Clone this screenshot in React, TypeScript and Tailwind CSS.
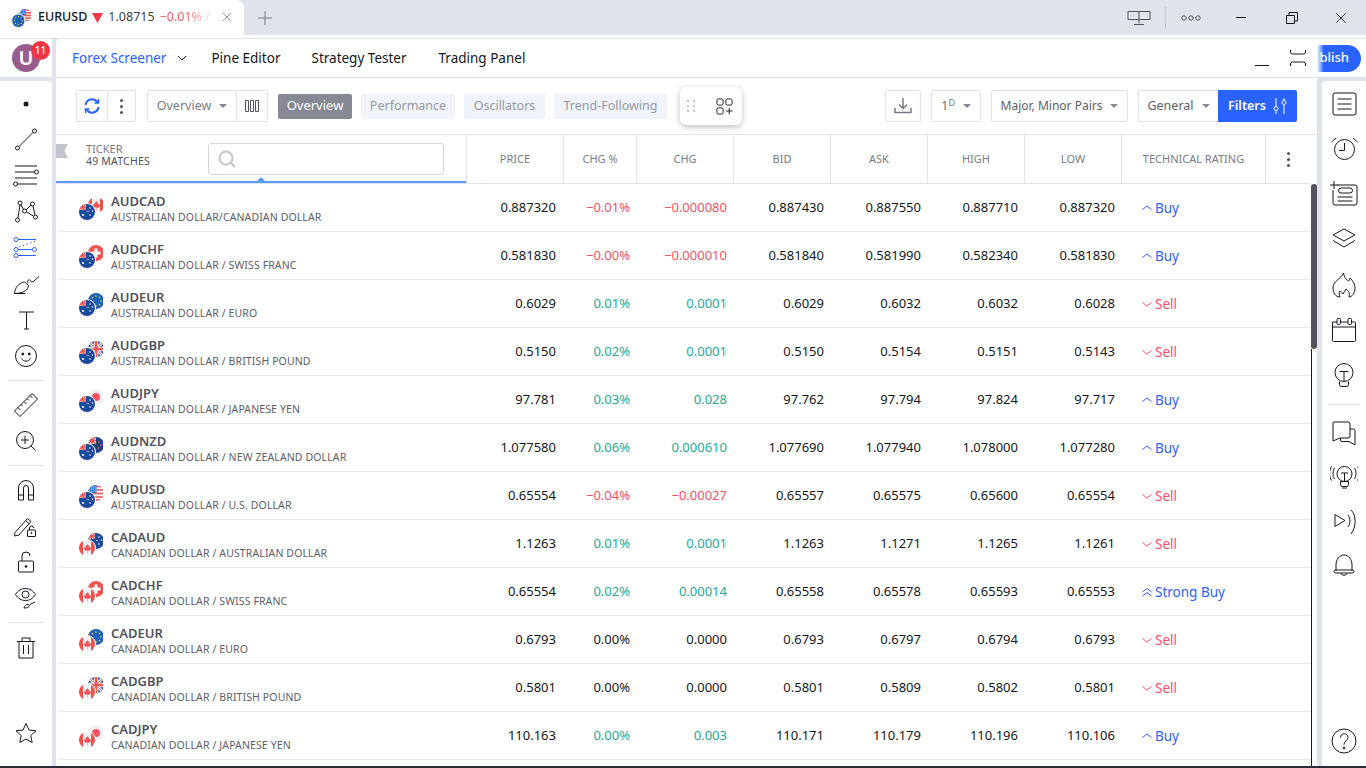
import type { ReactNode } from "react";

const cols = "grid grid-cols-[410px_97px_73px_97px_97px_97px_97px_97px_144px_45px]";

type Cur = "AU" | "CA" | "CH" | "EU" | "GB" | "JP" | "NZ" | "US";

interface Row {
  sym: string;
  desc: string;
  a: Cur;
  b: Cur;
  vals: string[];
  chgP: string;
  chg: string;
  dir: "up" | "down" | "flat" | "upchg";
  rating: "Buy" | "Sell" | "Strong Buy";
}

const rows: Row[] = [
  { sym: "AUDCAD", desc: "AUSTRALIAN DOLLAR/CANADIAN DOLLAR", a: "AU", b: "CA", chgP: "−0.01%", chg: "−0.000080", dir: "down", rating: "Buy", vals: ["0.887320", "0.887430", "0.887550", "0.887710", "0.887320"] },
  { sym: "AUDCHF", desc: "AUSTRALIAN DOLLAR / SWISS FRANC", a: "AU", b: "CH", chgP: "−0.00%", chg: "−0.000010", dir: "down", rating: "Buy", vals: ["0.581830", "0.581840", "0.581990", "0.582340", "0.581830"] },
  { sym: "AUDEUR", desc: "AUSTRALIAN DOLLAR / EURO", a: "AU", b: "EU", chgP: "0.01%", chg: "0.0001", dir: "up", rating: "Sell", vals: ["0.6029", "0.6029", "0.6032", "0.6032", "0.6028"] },
  { sym: "AUDGBP", desc: "AUSTRALIAN DOLLAR / BRITISH POUND", a: "AU", b: "GB", chgP: "0.02%", chg: "0.0001", dir: "up", rating: "Sell", vals: ["0.5150", "0.5150", "0.5154", "0.5151", "0.5143"] },
  { sym: "AUDJPY", desc: "AUSTRALIAN DOLLAR / JAPANESE YEN", a: "AU", b: "JP", chgP: "0.03%", chg: "0.028", dir: "up", rating: "Buy", vals: ["97.781", "97.762", "97.794", "97.824", "97.717"] },
  { sym: "AUDNZD", desc: "AUSTRALIAN DOLLAR / NEW ZEALAND DOLLAR", a: "AU", b: "NZ", chgP: "0.06%", chg: "0.000610", dir: "up", rating: "Buy", vals: ["1.077580", "1.077690", "1.077940", "1.078000", "1.077280"] },
  { sym: "AUDUSD", desc: "AUSTRALIAN DOLLAR / U.S. DOLLAR", a: "AU", b: "US", chgP: "−0.04%", chg: "−0.00027", dir: "down", rating: "Sell", vals: ["0.65554", "0.65557", "0.65575", "0.65600", "0.65554"] },
  { sym: "CADAUD", desc: "CANADIAN DOLLAR / AUSTRALIAN DOLLAR", a: "CA", b: "AU", chgP: "0.01%", chg: "0.0001", dir: "up", rating: "Sell", vals: ["1.1263", "1.1263", "1.1271", "1.1265", "1.1261"] },
  { sym: "CADCHF", desc: "CANADIAN DOLLAR / SWISS FRANC", a: "CA", b: "CH", chgP: "0.02%", chg: "0.00014", dir: "up", rating: "Strong Buy", vals: ["0.65554", "0.65558", "0.65578", "0.65593", "0.65553"] },
  { sym: "CADEUR", desc: "CANADIAN DOLLAR / EURO", a: "CA", b: "EU", chgP: "0.00%", chg: "0.0000", dir: "flat", rating: "Sell", vals: ["0.6793", "0.6793", "0.6797", "0.6794", "0.6793"] },
  { sym: "CADGBP", desc: "CANADIAN DOLLAR / BRITISH POUND", a: "CA", b: "GB", chgP: "0.00%", chg: "0.0000", dir: "flat", rating: "Sell", vals: ["0.5801", "0.5801", "0.5809", "0.5802", "0.5801"] },
  { sym: "CADJPY", desc: "CANADIAN DOLLAR / JAPANESE YEN", a: "CA", b: "JP", chgP: "0.00%", chg: "0.003", dir: "upchg", rating: "Buy", vals: ["110.163", "110.171", "110.179", "110.196", "110.106"] },
];

// flag artwork, drawn in a 16x16 box and clipped to a circle by the caller
const FlagArt = ({ c }: { c: Cur }) => {
  switch (c) {
    case "AU":
      return (
        <>
          <rect width="16" height="16" fill="#1a4a9c" />
          <rect width="7" height="6" fill="#f0f2f5" />
          <path d="M0 0l7 6M7 0L0 6" stroke="#ef5350" strokeWidth="1.2" />
          <path d="M3.5 0v6M0 3h7" stroke="#ef5350" strokeWidth="1.4" />
          <circle cx="4" cy="11" r="1.1" fill="#fff" />
          <circle cx="11" cy="4" r=".8" fill="#fff" />
          <circle cx="13.5" cy="7" r=".8" fill="#fff" />
          <circle cx="11" cy="11" r=".8" fill="#fff" />
          <circle cx="9" cy="7.5" r=".7" fill="#fff" />
        </>
      );
    case "NZ":
      return (
        <>
          <rect width="16" height="16" fill="#1a3f8c" />
          <rect width="8" height="7" fill="#f0f2f5" />
          <path d="M0 0l8 7M8 0L0 7" stroke="#ef5350" strokeWidth="1.4" />
          <path d="M4 0v7M0 3.5h8" stroke="#ef5350" strokeWidth="1.6" />
          <circle cx="11" cy="5" r=".9" fill="#ef5350" />
          <circle cx="13" cy="8" r=".9" fill="#ef5350" />
          <circle cx="10.5" cy="11" r=".9" fill="#ef5350" />
        </>
      );
    case "CA":
      return (
        <>
          <rect width="16" height="16" fill="#f0f2f5" />
          <rect width="4" height="16" fill="#ef5350" />
          <rect x="12" width="4" height="16" fill="#ef5350" />
          <path d="M8 3.5l1 2 1.2-.5-.4 2.6 1.4-.8.4 1.2 1 .2-1.4 1.6.2 1-2.7-.3V13h-.4v-2.5l-2.7.3.2-1L4.4 8.2l1-.2.4-1.2 1.4.8L6.8 5 8 5.5z" fill="#ef5350" />
        </>
      );
    case "CH":
      return (
        <>
          <rect width="16" height="16" fill="#ef5350" />
          <path d="M6.5 3.5h3v3h3v3h-3v3h-3v-3h-3v-3h3z" fill="#fff" />
        </>
      );
    case "EU":
      return (
        <>
          <rect width="16" height="16" fill="#1f63b5" />
          {[0, 1, 2, 3, 4, 5, 6, 7].map((i) => (
            <circle
              key={i}
              cx={8 + 5 * Math.cos((i * Math.PI) / 4)}
              cy={8 + 5 * Math.sin((i * Math.PI) / 4)}
              r=".8"
              fill="#f9cf4a"
            />
          ))}
        </>
      );
    case "GB":
      return (
        <>
          <rect width="16" height="16" fill="#1a4a9c" />
          <path d="M0 0l16 16M16 0L0 16" stroke="#f0f2f5" strokeWidth="3" />
          <path d="M0 0l16 16M16 0L0 16" stroke="#ef5350" strokeWidth="1" />
          <path d="M8 0v16M0 8h16" stroke="#f0f2f5" strokeWidth="4.5" />
          <path d="M8 0v16M0 8h16" stroke="#ef5350" strokeWidth="2.5" />
        </>
      );
    case "JP":
      return (
        <>
          <rect width="16" height="16" fill="#eef0f5" />
          <circle cx="8" cy="8" r="4" fill="#f7525f" />
        </>
      );
    case "US":
      return (
        <>
          <rect width="16" height="16" fill="#f0f2f5" />
          <path d="M0 1.5h16M0 5h16M0 8.5h16M0 12h16M0 15h16" stroke="#ef5350" strokeWidth="1.7" />
          <rect width="8.5" height="8" fill="#2f7de1" />
          <path d="M1 2h7M1 4h7M1 6h7" stroke="#dbe6f7" strokeWidth=".8" strokeDasharray="1 1" />
        </>
      );
  }
};

const PairFlag = ({ a, b, id, className = "h-6 w-6 shrink-0" }: { a: Cur; b: Cur; id: string; className?: string }) => (
  <svg viewBox="0 0 24 24" className={className}>
    <defs>
      <clipPath id={id + "b"}>
        <circle cx="8" cy="8" r="8" />
      </clipPath>
      <clipPath id={id + "a"}>
        <circle cx="8" cy="8" r="8" />
      </clipPath>
    </defs>
    <g transform="translate(9 1)" clipPath={"url(#" + id + "b)"}>
      <FlagArt c={b} />
    </g>
    <circle cx="8" cy="16" r="9" fill="#fff" />
    <g transform="translate(0 8)" clipPath={"url(#" + id + "a)"}>
      <FlagArt c={a} />
    </g>
  </svg>
);

const Ico = ({ children }: { children: ReactNode }) => (
  <svg viewBox="0 0 28 28" fill="none" stroke="currentColor" strokeWidth="1" className="h-7 w-7">
    {children}
  </svg>
);

const Caret = () => (
  <svg viewBox="0 0 8 4" className="h-1 w-2 fill-[#868993]">
    <path d="M0 0h8L4 4z" />
  </svg>
);

const leftTop: ReactNode[] = [
  <circle cx="14" cy="14" r="2.5" fill="currentColor" stroke="none" />,
  <>
    <circle cx="5.5" cy="22" r="2" />
    <circle cx="22.5" cy="5" r="2" />
    <path d="M7 20.5L21 6.5" />
  </>,
  <>
    <path d="M3 4h22M3 10h19.5M3 16h22M5.5 22H25" />
    <circle cx="24.5" cy="10" r="2" />
    <circle cx="3.5" cy="22" r="2" />
  </>,
  <>
    <circle cx="5.5" cy="22" r="2" />
    <circle cx="8" cy="5" r="2" />
    <circle cx="12.5" cy="13" r="2" />
    <circle cx="20.5" cy="6" r="2" />
    <circle cx="23.5" cy="19" r="2" />
    <path d="M6 20l2-13M9 7l2.5 4.5M14 12l5-5M21 8l2 9M14.5 14l7 4" />
  </>,
  <g stroke="#2962ff">
    <circle cx="4" cy="5.5" r="2" />
    <circle cx="4" cy="15.5" r="2" />
    <circle cx="4" cy="21.5" r="2" />
    <circle cx="22.5" cy="15.5" r="2" />
    <path d="M6 5.5h18M6 15.5h14.5M6 21.5h18" />
    <path d="M7 13l17-6" strokeDasharray="1.5 2.5" />
  </g>,
  <>
    <path d="M2.5 23.5c.5-6 4.5-11 10-11.5l4 3.5c-.5 5-6 8-14 8zM2.5 23.5h11" />
    <path d="M16 13c-1-3 1-4 2.5-2.5.5 2 2 1.5 3.5.5l5-4.5" />
  </>,
  <path d="M7 6h15M14.5 6v17M12 23h5" />,
  <>
    <circle cx="14" cy="14" r="10.5" />
    <circle cx="10.8" cy="12" r="1" fill="currentColor" />
    <circle cx="17.2" cy="12" r="1" fill="currentColor" />
    <path d="M9.5 16.5c2 3.5 7 3.5 9 0" />
  </>,
];

const leftMid: ReactNode[] = [
  <>
    <path d="M2.5 20L20 2.5l5.5 5.5L8 25.5z" />
    <path d="M6 16.5l2.5 2.5M9 13.5l1.5 1.5M12 10.500l2.5 2.5M15 7.5l1.5 1.5M18 4.5l2.5 2.5" />
  </>,
  <>
    <circle cx="13" cy="13" r="8.5" />
    <path d="M13 9v8M9 13h8M19 19l4.5 4.5" />
  </>,
];

const leftMag: ReactNode[] = [
  <>
    <path d="M6.5 24V12a7.5 7.5 0 0115 0v12h-5V12a2.5 2.5 0 00-5 0v12z" />
    <path d="M6.5 19h5M16.5 19h5" />
  </>,
  <>
    <path d="M3 20.5L15.5 6.5l3.5 3L7 23l-4.5 1z" />
    <path d="M13.5 8.5l3.5 3" />
    <rect x="15.5" y="18" width="8" height="6.5" rx=".5" />
    <path d="M17.5 18v-2a2 2 0 014 0" />
    <circle cx="19.5" cy="21" r=".6" fill="currentColor" />
  </>,
  <>
    <rect x="6.5" y="13" width="15" height="11" rx="1" />
    <path d="M10 13V8a4 4 0 018 0" />
    <circle cx="14" cy="18.5" r="1.3" fill="currentColor" stroke="none" />
  </>,
  <>
    <path d="M3.5 10.5C6 6.5 9.5 4.5 13.5 4.5s7.5 2 10 6c-2.5 4-6 6-10 6s-7.500-2-10-6z" />
    <circle cx="13.5" cy="10.5" r="3.5" />
    <path d="M12 24c.5-2.500 2-3.500 4-3.500l1.500 1c-.5 2-2.500 2.500-5.500 2.500zM18 20.500l5-2.500" />
  </>,
];

const rightTop: ReactNode[] = [
  <>
    <rect x="3" y="3" width="23" height="22" rx="2" />
    <path d="M7.5 9h14M7.5 14h14M7.5 19h14" />
  </>,
  <>
    <circle cx="14.5" cy="14.5" r="10" />
    <path d="M14.5 8v7.5H9M1.5 7L6 3M27.5 7L23 3" />
  </>,
  <>
    <path d="M7 5h18a2 2 0 012 2v16a2 2 0 01-2 2H5a2 2 0 01-2-2V10" />
    <rect x="8.5" y="8" width="14" height="5" rx="2.5" />
    <path d="M7.5 17h15M7.5 21h15M4 1v8M0 5h8" />
  </>,
  <path d="M14 3l11 6-11 6-11-6zM3 14.5l11 6.5 11-6.5" />,
  <path d="M13.5 2c1 5.500 3 6.500 5 8 1-1 1.500-2 1.500-3 3 3 5 6 5 10 0 5-3 9-6 9 1-3 0-6-3-8-1 2-2 3-3 5-1-1.500-2-2-3-3-1 2-1 4 0 6-5 0-7-5-7-9 0-7 8-9 10.500-15z" />,
  <>
    <path d="M2.5 6h22a1 1 0 011 1v17.500a1 1 0 01-1 1h-21a1 1 0 01-1-1V6zM2.500 11h23" />
    <rect x="7" y="2.5" width="3.5" height="6" rx="1" fill="#fff" />
    <rect x="18" y="2.5" width="3.5" height="6" rx="1" fill="#fff" />
  </>,
  <>
    <circle cx="14" cy="11.5" r="9" />
    <path d="M9.5 10.5h9M14 10.5V20M9.5 20.500v3a2 2 0 002 2h5a2 2 0 002-2v-3" />
  </>,
];

const rightBottom: ReactNode[] = [
  <>
    <path d="M4 3h14a2 2 0 012 2v12a2 2 0 01-2 2H10l-7 3V4a1 1 0 011-1z" />
    <path d="M20 10h3.5a1.5 1.5 0 011.5 1.5V26l-6-3.500h-7a1.500 1.500 0 01-1.500-1.500v-2" />
  </>,
  <>
    <circle cx="14.5" cy="11" r="7.5" />
    <path d="M11 10h7M14.5 10v8.500M10.500 18.500h8v3a2 2 0 01-2 2h-4a2 2 0 01-2-2zM12 25h5" />
    <path d="M4.5 5c-2 3-2 8 0 11M1.500 3.500c-2.500 4-2.500 10 0 14M24.500 5c2 3 2 8 0 11M27.500 3.500c2.500 4 2.500 10 0 14" />
  </>,
  <>
    <path d="M5 7.5l10 6-10 6z" />
    <path d="M18 8c2.500 3 2.500 9 0 12M21 3c5.500 5 5.500 17 0 24" />
  </>,
  <>
    <path d="M6 20v-6c0-5 3-10 8-10s8 5 8 10v6" />
    <path d="M4 20.5a1.5 1.5 0 011.5-1.5h17a1.500 1.500 0 010 3h-17A1.500 1.500 0 014 20.500zM11 22c.5 3 5.500 3 6 0" />
  </>,
];

const Chip = ({ children, w }: { children: ReactNode; w: string }) => (
  <div className={"flex h-[25px] items-center justify-center rounded-[2px] bg-[#f0f3fa] text-[12.5px] text-[#9598a1] " + w}>{children}</div>
);

const dirColor = { up: "text-[#22ab94]", upchg: "text-[#22ab94]", down: "text-[#f7525f]", flat: "text-[#131722]" };

const Rating = ({ r }: { r: Row["rating"] }) => {
  const sell = r === "Sell";
  return (
    <div className={"flex items-center gap-[2px] pl-5 text-[13.5px] " + (sell ? "text-[#f7525f]" : "text-[#2962ff]")}>
      <svg viewBox="0 0 12 12" fill="none" stroke="currentColor" strokeWidth="1" className="h-3 w-3">
        {sell && <path d="M1.5 4.5L6 8l4.500-3.500" />}
        {r === "Buy" && <path d="M1.5 7.5L6 4l4.500 3.500" />}
        {r === "Strong Buy" && <path d="M1.5 6L6 2.500 10.500 6M1.500 10L6 6.500 10.500 10" />}
      </svg>
      {r}
    </div>
  );
};

const TableRow = ({ row }: { row: Row }) => {
  const [price, bid, ask, high, low] = row.vals;
  const num = "flex items-center justify-end pr-1.5 text-[13px] text-[#131722]";
  return (
    <div className={cols + " relative h-12 shrink-0"}>
      <div className="flex items-center gap-2 pl-[23px]">
        <PairFlag a={row.a} b={row.b} id={row.sym} />
        <div className="flex flex-col pt-px">
          <span className="text-[13px] leading-4 font-semibold text-[#50535e]">{row.sym}</span>
          <span className="text-[10.5px] leading-4 tracking-[0.12px] text-[#5d606b]">{row.desc}</span>
        </div>
      </div>
      <div className={num + " pr-[7px]"}>{price}</div>
      <div className={"flex items-center justify-end pr-1.5 text-[13px] " + dirColor[row.dir]}>{row.chgP}</div>
      <div className={"flex items-center justify-end pr-1.5 text-[13px] " + dirColor[row.dir]}>{row.chg}</div>
      <div className={num}>{bid}</div>
      <div className={num}>{ask}</div>
      <div className={num}>{high}</div>
      <div className={num}>{low}</div>
      <Rating r={row.rating} />
      <div />
      <div className="absolute right-0 bottom-0 left-0.5 h-px bg-[#e8e9ee]" />
    </div>
  );
};

const HeadCell = ({ label }: { label: string }) => (
  <div className="flex items-center justify-center border-l border-[#e0e3eb] text-[11px] text-[#787b86]">{label}</div>
);

export default function App() {
  return (
    <div className="relative flex h-[768px] w-[1366px] flex-col overflow-hidden bg-[#e0e3eb] font-['Noto_Sans',sans-serif] text-[#131722]">
      {/* window title bar */}
      <div className="flex h-[35px] shrink-0 items-center">
        <div className="flex h-[38px] w-[244px] shrink-0 items-center self-start rounded-tr-lg bg-white pb-1 pl-3 text-[12.5px]">
          <PairFlag a="EU" b="US" id="tab" className="h-[19px] w-[19px] shrink-0" />
          <span className="ml-[7px] font-medium">EURUSD</span>
          <svg viewBox="0 0 10 10" className="mx-[5px] h-[11px] w-[11px] shrink-0 fill-[#f23645]"><path d="M0 1h10L5 10z" /></svg>
          <span className="text-[#3b3e48]">1.08715</span>
          <span className="ml-[5px] w-[50px] shrink-0 overflow-hidden bg-gradient-to-r from-[#f7525f] from-50% to-[#fde0e2] bg-clip-text whitespace-nowrap text-transparent">−0.01% /</span>
          <svg viewBox="0 0 12 12" fill="none" stroke="#868993" className="ml-3 h-2.5 w-2.5 shrink-0"><path d="M1 1l10 10M11 1L1 11" /></svg>
        </div>
        <svg viewBox="0 0 14 14" fill="none" stroke="#787b86" className="ml-[14px] h-[14px] w-[14px]"><path d="M7 0v14M0 7h14" /></svg>
        <div className="ml-auto flex items-center text-[#50535e]">
          <svg viewBox="0 0 24 16" fill="none" stroke="currentColor" className="h-4 w-6"><path d="M1 1.5h22v8H1zM12 1.5v12M7 14.5h10" /></svg>
          <div className="mr-[15px] ml-[14px] h-[22px] w-px bg-[#c1c4cd]" />
          <svg viewBox="0 0 20 6" fill="none" stroke="currentColor" className="h-1.5 w-5"><circle cx="3" cy="3" r="2.2" /><circle cx="10" cy="3" r="2.2" /><circle cx="17" cy="3" r="2.2" /></svg>
          <div className="ml-[35px] h-px w-2.5 bg-[#131722]" />
          <svg viewBox="0 0 12 12" fill="none" stroke="#131722" className="ml-10 h-3 w-3"><path d="M.5 3.5h8v8h-8zM3 3.500V.5h8.500V9H8.500" /></svg>
          <svg viewBox="0 0 12 12" fill="none" stroke="#131722" className="mr-5 ml-[38px] h-2.5 w-2.5"><path d="M.5.5l11 11M11.5.5l-11 11" /></svg>
        </div>
      </div>
      <div className="h-[3px] shrink-0 bg-white" />
      <div className="h-px shrink-0 bg-[#e0e3eb]" />

      <div className="flex min-h-0 flex-1 pb-0.5">
        {/* left drawing tools */}
        <div className="flex w-[52px] shrink-0 flex-col gap-1">
          <div className="relative flex h-[38px] shrink-0 items-center bg-white pl-3">
            <div className="flex h-7 w-7 items-center justify-center rounded-full bg-[#9a5c8d] text-[20px] font-semibold text-white">U</div>
            <div className="absolute top-[2px] left-[31px] flex h-[19px] w-[19px] items-center justify-center rounded-full bg-[#f23645] text-[10px] font-medium text-white">11</div>
          </div>
          <div className="flex min-h-0 flex-1 flex-col items-center rounded-tr bg-white pt-[5px] text-[#131722]">
            {leftTop.map((ic, i) => (
              <div key={i} className="flex h-9 w-full shrink-0 items-center justify-center"><Ico>{ic}</Ico></div>
            ))}
            <div className="my-1.5 h-px w-9 shrink-0 bg-[#e0e3eb]" />
            {leftMid.map((ic, i) => (
              <div key={i} className="flex h-9 w-full shrink-0 items-center justify-center"><Ico>{ic}</Ico></div>
            ))}
            <div className="my-1.5 h-px w-9 shrink-0 bg-[#e0e3eb]" />
            {leftMag.map((ic, i) => (
              <div key={i} className="flex h-9 w-full shrink-0 items-center justify-center"><Ico>{ic}</Ico></div>
            ))}
            <div className="my-1.5 h-px w-9 shrink-0 bg-[#e0e3eb]" />
            <div className="flex h-9 w-full shrink-0 items-center justify-center">
              <Ico>
                <path d="M10 8V5h8v3M5 8.5h18M7 8.5V25h14V8.5M11.5 12v9M16.5 12v9" />
              </Ico>
            </div>
            <div className="mt-auto mb-[15px] flex h-9 w-full shrink-0 items-center justify-center">
              <Ico>
                <path d="M14 4.5l3 6.5 7 .8-5.2 4.7 1.4 7L14 20l-6.2 3.5 1.4-7L4 11.8l7-.8z" />
              </Ico>
            </div>
          </div>
        </div>

        {/* main panel */}
        <div className="ml-1 flex w-[1261px] shrink-0 flex-col overflow-hidden rounded-tl bg-white">
          <div className="flex h-[39px] shrink-0 items-center border-b border-[#e0e3eb] pl-4 text-[13.5px]">
            <span className="text-[#2962ff]">Forex Screener</span>
            <svg viewBox="0 0 10 6" fill="none" stroke="#131722" className="ml-[11px] h-1.5 w-2.5"><path d="M1 1l4 4 4-4" /></svg>
            <span className="ml-6">Pine Editor</span>
            <span className="ml-[31px]">Strategy Tester</span>
            <span className="ml-8">Trading Panel</span>
            <div className="ml-auto flex items-center pr-[11px]">
              <div className="mt-[14px] h-px w-[14px] bg-[#131722]" />
              <svg viewBox="0 0 16 16" fill="none" stroke="#131722" className="ml-[21px] h-4 w-4"><path d="M.5 0v2a2 2 0 002 2h11a2 2 0 002-2V0M.5 16v-2a2 2 0 012-2h11a2 2 0 012 2v2" /></svg>
            </div>
          </div>

          {/* toolbar */}
          <div className="flex h-[57px] shrink-0 items-center border-b border-[#e0e3eb] pl-5 text-[#787b86]">
            <div className="flex h-8 w-[60px] rounded-[2px] border border-[#e0e3eb]">
              <div className="flex w-[31px] items-center justify-center border-r border-[#e0e3eb]">
                <svg viewBox="0 0 16 16" fill="none" stroke="#2962ff" strokeWidth="2" className="h-4 w-4">
                  <path d="M1.5 7a6.5 6.5 0 0112-2.5M14.5 9a6.500 6.500 0 01-12 2.500" />
                  <path d="M14.5 1v4h-4M1.500 15v-4h4" strokeWidth="1.5" />
                </svg>
              </div>
              <div className="flex flex-1 flex-col items-center justify-center gap-[3px]">
                <span className="h-[3px] w-[3px] rounded-full bg-[#50535e]" />
                <span className="h-[3px] w-[3px] rounded-full bg-[#50535e]" />
                <span className="h-[3px] w-[3px] rounded-full bg-[#50535e]" />
              </div>
            </div>
            <div className="ml-[11px] flex h-8 w-[121px] rounded-[2px] border border-[#e0e3eb]">
              <div className="flex w-[89px] items-center justify-center gap-2 border-r border-[#e0e3eb] text-[12.5px]">
                Overview <Caret />
              </div>
              <div className="flex flex-1 items-center justify-center">
                <svg viewBox="0 0 14 12" fill="none" stroke="#50535e" className="h-3 w-3.5"><path d="M.5.5h3v11h-3zM5.5.5h3v11h-3zM10.5.5h3v11h-3z" /></svg>
              </div>
            </div>
            <div className="ml-2.5 flex gap-[9px]">
              <div className="flex h-[25px] w-[74px] items-center justify-center rounded-[2px] bg-[#868993] text-[13px] text-white">Overview</div>
              <Chip w="w-[94px]">Performance</Chip>
              <Chip w="w-[81px]">Oscillators</Chip>
              <Chip w="w-[113px]">Trend-Following</Chip>
            </div>
            <div className="ml-[13px] flex h-[38px] w-[62px] items-center rounded-md bg-white pl-[7px] shadow-[0_2px_6px_rgba(0,0,0,0.25)]">
              <div className="grid grid-cols-2 gap-x-[4px] gap-y-[3px]">
                {[0, 1, 2, 3, 4, 5].map((i) => (
                  <span key={i} className="h-[2px] w-[2px] bg-[#c1c4cd]" />
                ))}
              </div>
              <svg viewBox="0 0 18 18" fill="none" stroke="#131722" className="ml-[21px] h-[17px] w-[17px]">
                <rect x="1" y="1" width="6.5" height="6.5" rx="1.5" />
                <rect x="10.5" y="1" width="6.5" height="6.5" rx="1.5" />
                <rect x="1" y="10.5" width="6.5" height="6.5" rx="1.5" />
                <path d="M10.5 13.75h7M14 10.5v7" />
              </svg>
            </div>
            <div className="ml-[143px] flex h-8 w-9 items-center justify-center rounded-[2px] border border-[#e0e3eb]">
              <svg viewBox="0 0 18 16" fill="none" stroke="#787b86" strokeWidth="1.5" className="h-4 w-[18px]"><path d="M9 0v10M5 6.5l4 4 4-4M1 10v4.5h16V10" /></svg>
            </div>
            <div className="ml-2.5 flex h-8 w-[50px] items-center justify-center gap-2 rounded-[2px] border border-[#e0e3eb] text-[13px]">
              <span>1<sup className="text-[9px]">D</sup></span>
              <Caret />
            </div>
            <div className="ml-2.5 flex h-8 w-[137px] items-center justify-center gap-2 rounded-[2px] border border-[#e0e3eb] text-[12px] text-[#5d606b]">
              Major, Minor Pairs <Caret />
            </div>
            <div className="ml-2.5 flex h-8 w-20 items-center justify-center gap-2 rounded-l-[2px] border border-r-0 border-[#e0e3eb] text-[12.5px] text-[#5d606b]">
              General <Caret />
            </div>
            <div className="flex h-8 w-[79px] items-center justify-center gap-[7px] rounded-r-[2px] bg-[#2962ff] text-[12.5px] font-semibold text-white">
              Filters
              <svg viewBox="0 0 14 16" fill="none" stroke="#fff" className="h-4 w-3.5">
                <path d="M3 0v8M3 13v3M11 0v2M11 7v9" />
                <circle cx="3" cy="10.5" r="2" />
                <circle cx="11" cy="4.5" r="2" />
              </svg>
            </div>
          </div>

          {/* table head */}
          <div className={cols + " h-[49px] w-[1254px] shrink-0 border-b border-[#e0e3eb]"}>
            <div className="relative flex items-center">
              <svg viewBox="0 0 12 14" className="absolute top-[9px] left-0 h-3.5 w-3 fill-[#c1c4cd]"><path d="M0 0h12L8.5 7 12 14H0z" /></svg>
              <div className="ml-[30px] flex w-[100px] flex-col pb-2 text-[#787b86]">
                <span className="text-[11px] leading-3">TICKER</span>
                <span className="text-[10.5px] leading-3 tracking-[0.2px] text-[#50535e]">49 MATCHES</span>
              </div>
              <div className="ml-[22px] flex h-8 w-[236px] items-center rounded-[3px] border border-[#d1d4dc] pl-[9px]">
                <svg viewBox="0 0 18 18" fill="none" stroke="#c1c4cd" strokeWidth="2" className="h-[18px] w-[18px]"><circle cx="8" cy="8" r="6.5" /><path d="M13 13l4 4" /></svg>
              </div>
              <div className="absolute right-0 bottom-0 left-0 h-0.5 bg-[#5b9cf6]" />
              <div className="absolute bottom-0.5 left-[201px] h-0 w-0 border-x-[4px] border-b-[4px] border-x-transparent border-b-[#5b9cf6]" />
            </div>
            <HeadCell label="PRICE" />
            <HeadCell label="CHG %" />
            <HeadCell label="CHG" />
            <HeadCell label="BID" />
            <HeadCell label="ASK" />
            <HeadCell label="HIGH" />
            <HeadCell label="LOW" />
            <HeadCell label="TECHNICAL RATING" />
            <div className="flex flex-col items-center justify-center gap-[3px] border-l border-[#e0e3eb]">
              <span className="h-[3px] w-[3px] rounded-full bg-[#50535e]" />
              <span className="h-[3px] w-[3px] rounded-full bg-[#50535e]" />
              <span className="h-[3px] w-[3px] rounded-full bg-[#50535e]" />
            </div>
          </div>

          {/* table body + scrollbar */}
          <div className="flex min-h-0 flex-1">
            <div className="flex w-[1255px] shrink-0 flex-col overflow-hidden">
              {rows.map((r) => (
                <TableRow key={r.sym} row={r} />
              ))}
            </div>
            <div className="flex w-1.5 shrink-0 flex-col">
              <div className="h-[165px] w-full shrink-0 rounded-full bg-[#50535e]" />
              <div className="w-px flex-1 bg-[#131722]" />
            </div>
          </div>
        </div>

        {/* right column */}
        <div className="flex min-w-0 flex-1 flex-col gap-1">
          <div className="flex h-[38px] shrink-0 items-center bg-white">
            <div className="flex h-[27px] w-11 items-center justify-end rounded-r-full bg-gradient-to-r from-white from-0% via-[#2962ff] via-15% to-[#2962ff] pr-3 text-[13px] font-medium text-white">
              blish
            </div>
          </div>
          <div className="ml-[5px] flex min-h-0 flex-1 flex-col items-center rounded-tl bg-white text-[#131722]">
            {rightTop.map((ic, i) => (
              <div key={i} className="flex h-[45.3px] w-full shrink-0 items-center justify-center"><Ico>{ic}</Ico></div>
            ))}
            <div className="my-1.5 h-px w-8 shrink-0 bg-[#e0e3eb]" />
            {rightBottom.map((ic, i) => (
              <div key={i} className="flex h-11 w-full shrink-0 items-center justify-center"><Ico>{ic}</Ico></div>
            ))}
            <div className="mt-auto mb-[3px] flex h-11 w-full shrink-0 items-center justify-center">
              <Ico>
                <circle cx="14" cy="14" r="12" />
                <path d="M10.5 10.5c0-5 7.5-5 7.5 0 0 3-4 3.5-4 7" />
                <circle cx="14" cy="21" r="1" />
              </Ico>
            </div>
          </div>
        </div>
      </div>

      {/* task bar edge */}
      <div className="absolute right-0 bottom-0 left-0 h-0.5 bg-[#2a2e39]" />
    </div>
  );
}
